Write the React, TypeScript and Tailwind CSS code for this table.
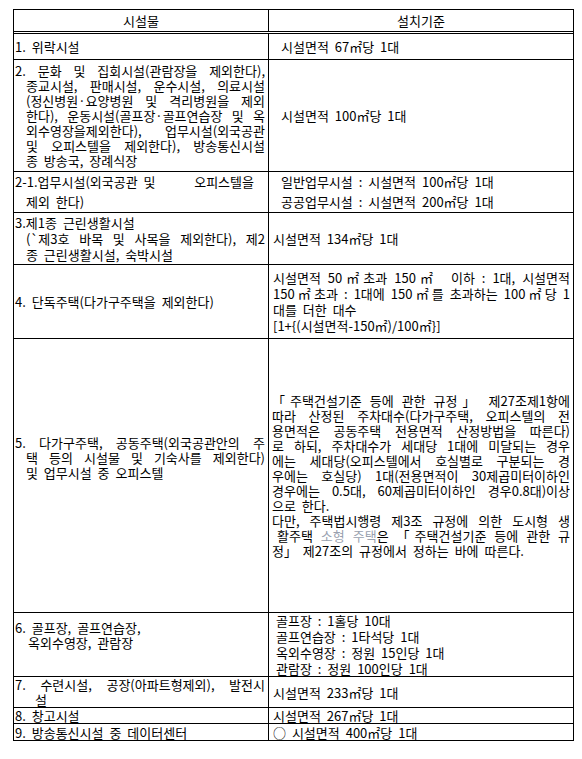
import React from "react";
import clsx from "clsx";

function L({ children, j, className }: { children: React.ReactNode; j?: boolean; className?: string }) {
  return (
    <div className={clsx(j && "text-justify [text-align-last:justify] [word-spacing:0px]", className)}>{children}</div>
  );
}

export default function App() {
  return (
    <div className="min-h-[759px] bg-white pt-[9px] pl-[13px] text-[13px] leading-[15px] text-black [word-spacing:3px] [font-family:'Noto_Sans_CJK_KR',sans-serif]">
      <div className="w-[561px] border border-black">
        {/* header */}
        <div className="flex h-[24px] border-b-[3px] border-double border-black">
          <div className="flex w-[255px] items-center justify-center border-r border-black">시설물</div>
          <div className="flex flex-1 items-center justify-center">설치기준</div>
        </div>

        {/* 1 */}
        <div className="flex h-[26px] border-b border-black">
          <div className="flex w-[255px] items-center border-r border-black pl-[1px]">1. 위락시설</div>
          <div className="flex flex-1 items-center pl-[12px]">시설면적 67㎡당 1대</div>
        </div>

        {/* 2 */}
        <div className="flex h-[112px] border-b border-black">
          <div className="flex w-[255px] flex-col justify-center border-r border-black pl-[1px] pr-[3px]">
            <L j>2. 문화 및 집회시설(관람장을 제외한다),</L>
            <L j className="pl-[11px]">종교시설, 판매시설, 운수시설, 의료시설</L>
            <L j className="pl-[11px]">(정신병원·요양병원 및 격리병원을 제외</L>
            <L j className="pl-[11px]">한다), 운동시설(골프장·골프연습장 및 옥</L>
            <L j className="pl-[11px]">외수영장을제외한다), 업무시설(외국공관</L>
            <L j className="pl-[11px]">및 오피스텔을 제외한다), 방송통신시설</L>
            <L className="pl-[11px]">종 방송국, 장례식장</L>
          </div>
          <div className="flex flex-1 items-center pl-[12px]">시설면적 100㎡당 1대</div>
        </div>

        {/* 2-1 */}
        <div className="flex h-[41px] border-b border-black leading-[20px]">
          <div className="flex w-[255px] flex-col justify-center border-r border-black pl-[1px] pr-[3px]">
            <div className="flex justify-between pr-[11px]">
              <span>2-1.업무시설(외국공관 및</span>
              <span>오피스텔을</span>
            </div>
            <L className="pl-[11px]">제외 한다)</L>
          </div>
          <div className="flex flex-1 flex-col justify-center pl-[12px]">
            <L>일반업무시설 : 시설면적 100㎡당 1대</L>
            <L>공공업무시설 : 시설면적 200㎡당 1대</L>
          </div>
        </div>

        {/* 3 */}
        <div className="flex h-[52px] border-b border-black leading-[16px]">
          <div className="flex w-[255px] flex-col justify-center border-r border-black pl-[1px] pr-[3px]">
            <L>3.제1종 근린생활시설</L>
            <L j className="pl-[11px]">(`제3호 바목 및 사목을 제외한다), 제2</L>
            <L className="pl-[11px]">종 근린생활시설, 숙박시설</L>
          </div>
          <div className="flex flex-1 items-center pl-[4px]">시설면적 134㎡당 1대</div>
        </div>

        {/* 4 */}
        <div className="flex h-[74px] border-b border-black">
          <div className="flex w-[255px] items-center border-r border-black pl-[1px]">4. 단독주택(다가구주택을 제외한다)</div>
          <div className="flex flex-1 flex-col justify-center pl-[4px] pr-[3px] leading-[16px]">
            <L j>시설면적 50㎡초과 150㎡{"\u00a0"} 이하 : 1대, 시설면적</L>
            <L j>150㎡초과 : 1대에 150㎡를 초과하는 100㎡당 1</L>
            <L>대를 더한 대수</L>
            <L>[1+{"{"}(시설면적-150㎡)/100㎡{"}"}]</L>
          </div>
        </div>

        {/* 5 */}
        <div className="flex h-[274px] border-b border-black">
          <div className="flex w-[255px] flex-col justify-center border-r border-black pl-[1px] pr-[3px] pb-[36px]">
            <L j>5. 다가구주택, 공동주택(외국공관안의 주</L>
            <L j className="pl-[11px]">택 등의 시설물 및 기숙사를 제외한다)</L>
            <L className="pl-[11px]">및 업무시설 중 오피스텔</L>
          </div>
          <div className="flex flex-1 flex-col justify-center pl-[3px] pr-[3px]">
            <L j>「주택건설기준 등에 관한 규정」 제27조제1항에</L>
            <L j>따라 산정된 주차대수(다가구주택, 오피스텔의 전</L>
            <L j>용면적은 공동주택 전용면적 산정방법을 따른다)</L>
            <L j>로 하되, 주차대수가 세대당 1대에 미달되는 경우</L>
            <L j>에는 세대당(오피스텔에서 호실별로 구분되는 경</L>
            <L j>우에는 호실당) 1대(전용면적이 30제곱미터이하인</L>
            <L j>경우에는 0.5대, 60제곱미터이하인 경우0.8대)이상</L>
            <L>으로 한다.</L>
            <L j>다만, 주택법시행령 제3조 규정에 의한 도시형 생</L>
            <L j className="pl-[5px]">
              활주택 <span className="text-gray-400">소형 주택</span>은 「주택건설기준 등에 관한 규
            </L>
            <L>정」 제27조의 규정에서 정하는 바에 따른다.</L>
          </div>
        </div>

        {/* 6 */}
        <div className="flex h-[64px] border-b border-black">
          <div className="flex w-[255px] flex-col border-r border-black pl-[1px] pt-[7px]">
            <L>6. 골프장, 골프연습장,</L>
            <L className="pl-[13px]">옥외수영장, 관람장</L>
          </div>
          <div className="flex flex-1 flex-col pl-[7px] leading-[16px]">
            <L>골프장 : 1홀당 10대</L>
            <L>골프연습장 : 1타석당 1대</L>
            <L>옥외수영장 : 정원 15인당 1대</L>
            <L>관람장 : 정원 100인당 1대</L>
          </div>
        </div>

        {/* 7 */}
        <div className="flex h-[31px] border-b border-black">
          <div className="flex w-[255px] flex-col justify-center border-r border-black pl-[1px] pr-[3px]">
            <L j>7. 수련시설, 공장(아파트형제외), 발전시</L>
            <L className="pl-[20px]">설</L>
          </div>
          <div className="flex flex-1 items-center pl-[4px]">시설면적 233㎡당 1대</div>
        </div>

        {/* 8 */}
        <div className="flex h-[16px] border-b border-black">
          <div className="flex w-[255px] items-center border-r border-black pl-[1px]">8. 창고시설</div>
          <div className="flex flex-1 items-center pl-[4px]">시설면적 267㎡당 1대</div>
        </div>

        {/* 9 */}
        <div className="flex h-[16px]">
          <div className="flex w-[255px] items-center border-r border-black pl-[1px]">9. 방송통신시설 중 데이터센터</div>
          <div className="flex flex-1 items-center pl-[4px]">○ 시설면적 400㎡당 1대</div>
        </div>
      </div>
    </div>
  );
}
